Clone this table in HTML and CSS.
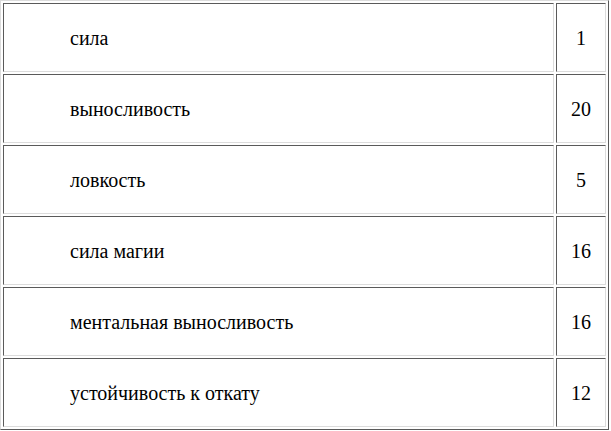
FILE: index.html
```html
<!DOCTYPE html>
<html>
<head>
<meta charset="utf-8">
<link rel="stylesheet" href="styles.css">
</head>
<body>
<table class="stats">
  <tr><td class="name">сила</td><td class="val">1</td></tr>
  <tr><td class="name">выносливость</td><td class="val">20</td></tr>
  <tr><td class="name">ловкость</td><td class="val">5</td></tr>
  <tr><td class="name">сила магии</td><td class="val">16</td></tr>
  <tr><td class="name">ментальная выносливость</td><td class="val">16</td></tr>
  <tr><td class="name">устойчивость к откату</td><td class="val">12</td></tr>
</table>
</body>
</html>
```
FILE: styles.css
```css
html, body {
  margin: 0;
  padding: 0;
  background: #fff;
}
.stats {
  border-collapse: separate;
  border-spacing: 2px;
  border: 1px solid;
  border-color: #dcdcdc #5a5a5a #5a5a5a #dcdcdc;
  width: 609px;
  font-family: "Liberation Serif", "Times New Roman", serif;
  font-size: 20px;
  color: #000;
}
.stats td {
  border: 1px solid;
  border-color: #5a5a5a #dcdcdc #dcdcdc #5a5a5a;
  height: 69px;
  padding: 0;
  box-sizing: border-box;
  vertical-align: middle;
  line-height: 22px;
}
.name {
  padding-left: 66px !important;
  text-align: left;
}
.val {
  width: 50px;
  text-align: center;
}
```
